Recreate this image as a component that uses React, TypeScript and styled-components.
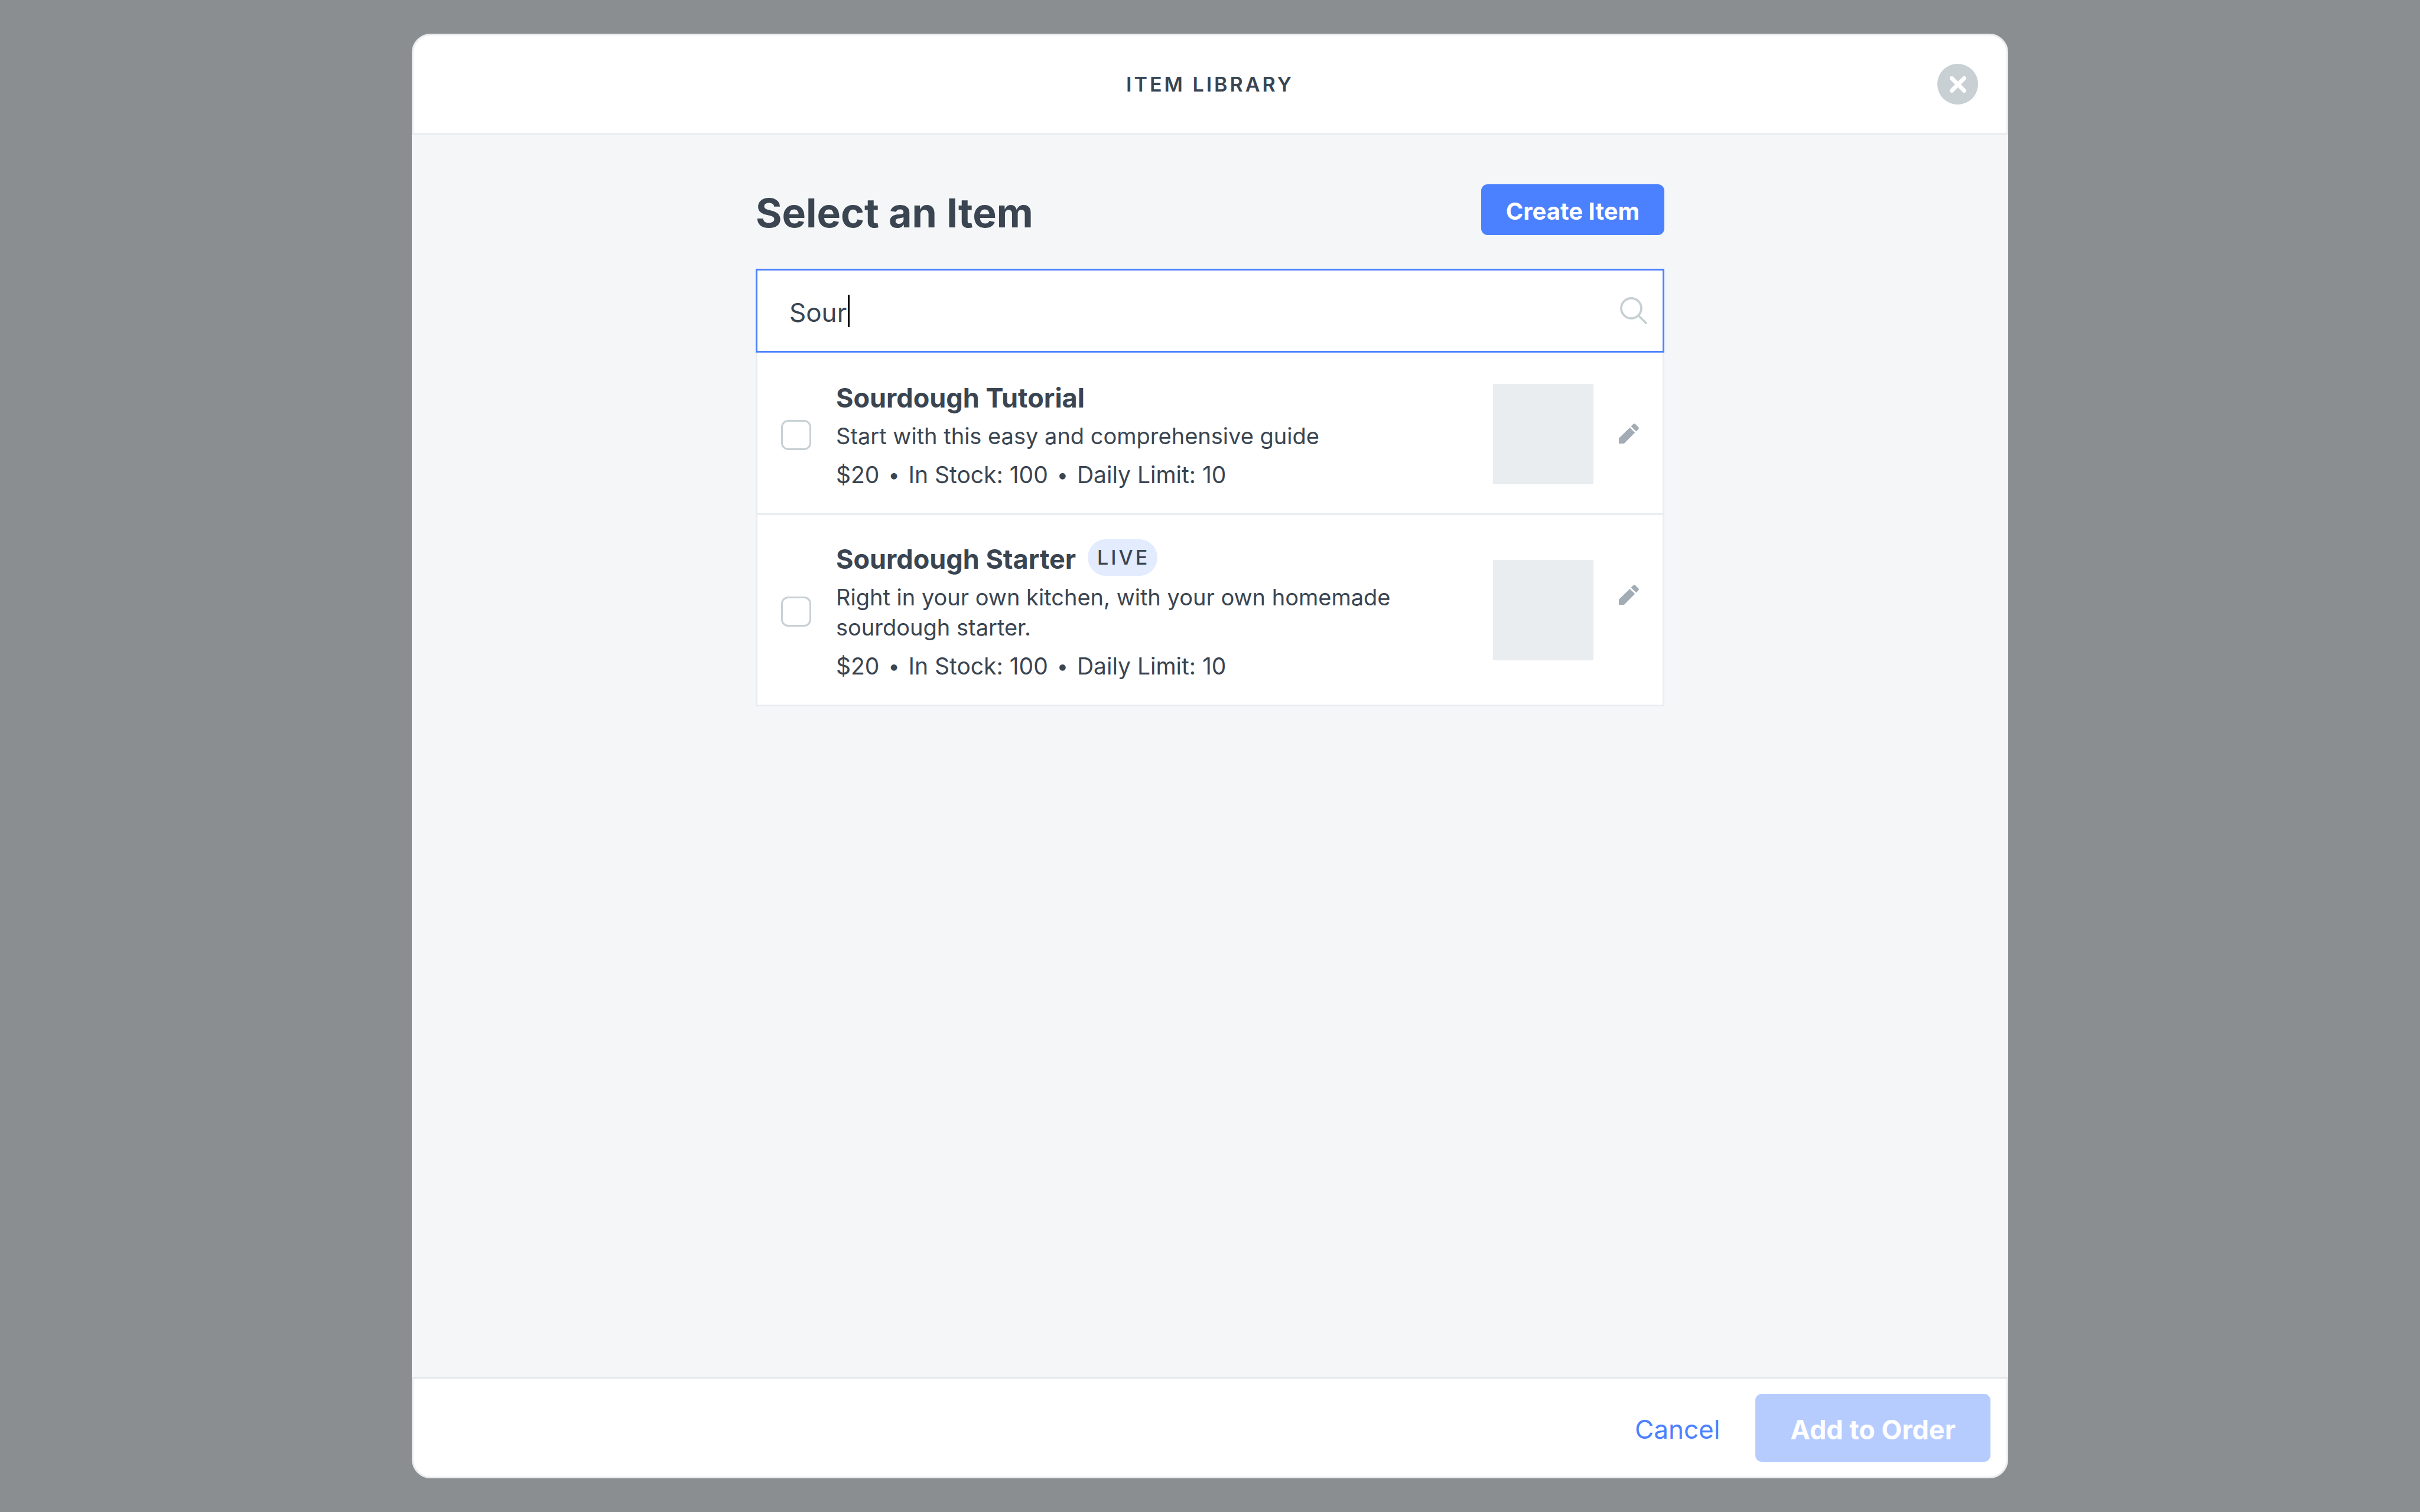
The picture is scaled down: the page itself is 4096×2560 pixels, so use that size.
import React, { useState } from "react";
import styled, { createGlobalStyle } from "styled-components";

const color = {
  backdrop: "#8a8e91",
  surface: "#ffffff",
  canvas: "#f4f6f8",
  line: "#e9edf0",
  control: "#c8d0d4",
  thumb: "#e9edf0",
  icon: "#a2acb5",
  text: "#3a4551",
  blue: "#4b80ff",
  blueMuted: "#b6ccff",
  blueTint: "#e3ebff",
};

const GlobalStyle = createGlobalStyle`
  *, *::before, *::after { box-sizing: border-box; }
  body {
    margin: 0;
    background: ${color.backdrop};
    color: ${color.text};
    font-family: Inter, Roboto, "Liberation Sans", sans-serif;
    font-size: 38px;
  }
  button, input { font-family: inherit; color: inherit; margin: 0; }
  h1, h2, h3, p, ul { margin: 0; padding: 0; }
`;

const Backdrop = styled.div`
  min-height: 100vh;
  padding: 57px;
  display: flex;
  justify-content: center;
  align-items: stretch;
`;

const Modal = styled.section`
  flex: 0 1 2702px;
  display: flex;
  flex-direction: column;
`;

const Header = styled.header`
  display: grid;
  grid-template-columns: 1fr auto 1fr;
  align-items: center;
  padding: 48px;
  background: ${color.surface};
  border: 3px solid ${color.line};
  border-radius: 32px 32px 0 0;
`;

const ModalTitle = styled.h1`
  grid-column: 2;
  font-size: 34px;
  line-height: 40px;
  font-weight: 600;
  letter-spacing: 4px;
  text-transform: uppercase;
`;

const CloseButton = styled.button`
  justify-self: end;
  width: 69px;
  height: 69px;
  padding: 0;
  border: 0;
  border-radius: 50%;
  background: ${color.control};
  display: grid;
  place-items: center;
`;

const Body = styled.main`
  flex: 1;
  padding: 84px 57px;
  background: ${color.canvas};
`;

const Column = styled.div`
  max-width: 1538px;
  margin: 0 auto;
`;

const Heading = styled.div`
  display: flex;
  justify-content: space-between;
  align-items: flex-start;
  margin-bottom: 47px;
`;

const PageTitle = styled.h2`
  font-size: 68px;
  line-height: 96px;
  font-weight: 700;
`;

const CreateButton = styled.button`
  height: 86px;
  padding: 4px 42px 0;
  border: 0;
  border-radius: 11px;
  background: ${color.blue};
  color: #fff;
  font-size: 40px;
  font-weight: 700;
`;

const SearchBox = styled.label`
  display: flex;
  align-items: center;
  height: 142px;
  padding: 0 26px 0 54px;
  border: 3px solid ${color.blue};
  background: ${color.surface};
`;

const SearchInput = styled.input`
  field-sizing: content;
  min-width: 8px;
  height: 80px;
  padding: 6px 0 0;
  border: 0;
  outline: 0;
  background: transparent;
  caret-color: transparent;
  font-size: 44px;
`;

const Caret = styled.span`
  width: 3px;
  height: 55px;
  margin-left: 2px;
  background: #000;
`;

const SearchIcon = styled.svg`
  margin-left: auto;
  flex: none;
  width: 46px;
  height: 46px;
`;

const List = styled.ul`
  list-style: none;
  padding-top: 2px;
  background: ${color.surface};
  border: solid ${color.line};
  border-width: 0 3px;
`;

const Row = styled.li`
  display: flex;
  align-items: center;
  padding: 41px 40px 40px;
  border-bottom: 3px solid ${color.line};
`;

const Check = styled.input`
  appearance: none;
  flex: none;
  width: 51px;
  height: 51px;
  border: 3px solid ${color.control};
  border-radius: 12px;
  background: ${color.surface};
  &:checked { background: ${color.blue}; border-color: ${color.blue}; }
`;

const CheckCell = styled.div`
  display: flex;
  flex: none;
  padding-top: 4px;
  margin-right: 42px;
`;

const Details = styled.div`
  flex: 1;
  min-width: 0;
  margin-right: 40px;
`;

const NameLine = styled.div`
  display: flex;
  align-items: flex-start;
  gap: 20px;
  margin-bottom: 5px;
`;

const Name = styled.label`
  font-size: 45px;
  line-height: 68px;
  font-weight: 700;
`;

const Badge = styled.span`
  padding: 0 13px 0 16px;
  border-radius: 31px;
  background: ${color.blueTint};
  font-size: 34px;
  line-height: 62px;
  font-weight: 500;
  letter-spacing: 4px;
`;

const Description = styled.p`
  font-size: 38px;
  line-height: 51px;
  margin-bottom: 14px;
`;

const Meta = styled.p`
  display: flex;
  gap: 15px;
  font-size: 39px;
  line-height: 51px;
`;

const Dot = styled.span`
  font-size: 34px;
`;

const Thumb = styled.div`
  flex: none;
  width: 170px;
  height: 170px;
  margin-right: 43px;
  background: ${color.thumb};
`;

const EditButton = styled.button`
  align-self: flex-start;
  display: grid;
  place-items: center;
  width: 34px;
  height: 188px;
  padding: 0;
  border: 0;
  background: none;
  color: ${color.icon};
`;

const Footer = styled.footer`
  display: flex;
  justify-content: flex-end;
  align-items: center;
  gap: 60px;
  padding: 25px 27px;
  background: ${color.surface};
  border: 3px solid ${color.line};
  border-radius: 0 0 32px 32px;
  box-shadow: 0 -1px 0 #dcdfe2;
`;

const CancelButton = styled.button`
  height: 115px;
  padding: 5px 0 0;
  border: 0;
  background: none;
  color: ${color.blue};
  font-size: 44px;
`;

const AddButton = styled.button`
  height: 115px;
  padding: 5px 59px 0;
  border: 0;
  border-radius: 11px;
  background: ${color.blueMuted};
  color: #fff;
  font-size: 45px;
  font-weight: 700;
`;

type Item = {
  id: string;
  name: string;
  live?: boolean;
  description: string;
  facts: string[];
};

const items: Item[] = [
  {
    id: "tutorial",
    name: "Sourdough Tutorial",
    description: "Start with this easy and comprehensive guide",
    facts: ["$20", "In Stock: 100", "Daily Limit: 10"],
  },
  {
    id: "starter",
    name: "Sourdough Starter",
    live: true,
    description:
      "Right in your own kitchen, with your own homemade sourdough starter.",
    facts: ["$20", "In Stock: 100", "Daily Limit: 10"],
  },
];

function PencilIcon() {
  return (
    <svg width="34" height="34" viewBox="3 3 18 18" fill="currentColor" aria-hidden="true">
      <path d="M3 16.3V21h4.7l9.7-9.8-4.55-4.55z" />
      <path d="M13.9 5.55l1.9-1.95c.6-.6 1.5-.6 2.1 0l2.5 2.6c.7.7.7 1.5 0 2.1l-1.95 1.85z" />
    </svg>
  );
}

function ItemRow({ item }: { item: Item }) {
  return (
    <Row>
      <CheckCell>
        <Check type="checkbox" id={item.id} />
      </CheckCell>
      <Details>
        <NameLine>
          <Name htmlFor={item.id}>{item.name}</Name>
          {item.live && <Badge>LIVE</Badge>}
        </NameLine>
        <Description>{item.description}</Description>
        <Meta>
          {item.facts.map((fact, i) => (
            <React.Fragment key={fact}>
              {i > 0 && <Dot>•</Dot>}
              <span>{fact}</span>
            </React.Fragment>
          ))}
        </Meta>
      </Details>
      <Thumb />
      <EditButton type="button" aria-label={`Edit ${item.name}`}>
        <PencilIcon />
      </EditButton>
    </Row>
  );
}

export default function App() {
  const [query, setQuery] = useState("Sour");
  return (
    <>
      <GlobalStyle />
      <Backdrop>
        <Modal role="dialog" aria-labelledby="modal-title">
          <Header>
            <ModalTitle id="modal-title">Item Library</ModalTitle>
            <CloseButton type="button" aria-label="Close">
              <svg width="28" height="28" viewBox="0 0 28 28" aria-hidden="true">
                <path d="M3.5 3.5l21 21M24.5 3.5l-21 21" stroke="#fff" strokeWidth="7" strokeLinecap="round" />
              </svg>
            </CloseButton>
          </Header>
          <Body>
            <Column>
              <Heading>
                <PageTitle>Select an Item</PageTitle>
                <CreateButton type="button">Create Item</CreateButton>
              </Heading>
              <SearchBox>
                <SearchInput
                  type="text"
                  aria-label="Search items"
                  value={query}
                  onChange={(e) => setQuery(e.target.value)}
                />
                <Caret />
                <SearchIcon viewBox="0 0 46 46" fill="none" stroke={color.control} strokeLinecap="round" aria-hidden="true">
                  <circle cx="19" cy="19" r="17" strokeWidth="3.8" />
                  <path d="M31.5 31.5L44 44" strokeWidth="3.8" />
                </SearchIcon>
              </SearchBox>
              <List>
                {items.map((item) => (
                  <ItemRow key={item.id} item={item} />
                ))}
              </List>
            </Column>
          </Body>
          <Footer>
            <CancelButton type="button">Cancel</CancelButton>
            <AddButton type="button">Add to Order</AddButton>
          </Footer>
        </Modal>
      </Backdrop>
    </>
  );
}
